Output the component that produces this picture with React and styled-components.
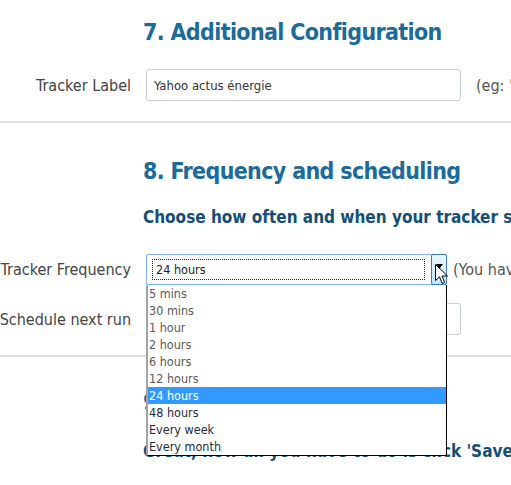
import React from "react";
import styled, { createGlobalStyle } from "styled-components";

const Global = createGlobalStyle`
  html, body { margin: 0; padding: 0; background: #fff; overflow: hidden; }
  body { font-family: "DejaVu Sans Condensed", "DejaVu Sans", sans-serif; }
`;

const Page = styled.div`
  width: 511px;
  height: 485px;
  overflow: hidden;
  position: relative;
`;

const Section = styled.section`
  padding: ${(p) => p.$pad || "0"};
  display: flex;
  flex-direction: column;
`;

const Heading = styled.h2`
  margin: 0 0 0 143px;
  font-size: 23px;
  line-height: 28px;
  letter-spacing: -0.65px;
  font-weight: bold;
  color: #1c6b9b;
  white-space: nowrap;
`;

const Intro = styled.h3`
  margin: ${(p) => p.$m || "0"};
  margin-left: 143px;
  font-size: 17px;
  line-height: 20px;
  font-weight: bold;
  color: #134f78;
  white-space: nowrap;
`;

const Row = styled.div`
  display: grid;
  grid-template-columns: 131px ${(p) => p.$field}px max-content;
  column-gap: 15px;
  align-items: center;
  margin-top: ${(p) => p.$mt || 0}px;
  white-space: nowrap;
`;

const Label = styled.label`
  text-align: right;
  font-size: 16px;
  line-height: 19px;
  color: #444;
  justify-self: end;
`;

const TextBox = styled.div`
  height: 30px;
  border: 1px solid #c5ccd3;
  border-radius: 3px;
  display: flex;
  align-items: center;
  padding-left: 7px;
  font-size: 13px;
  color: #333;
`;

const Hint = styled.span`
  font-size: 16px;
  color: #555;
  margin-left: ${(p) => p.$ml || 0}px;
`;

const Quote = styled.span`
  color: #e0803a;
`;

const SelectWrap = styled.div`
  position: relative;
  width: 301px;
`;

const SelectBox = styled.div`
  height: 29px;
  border: 1px solid #7eb4ea;
  border-radius: 2px;
  display: flex;
  align-items: stretch;
  background: #fff;
`;

const FocusField = styled.div`
  flex: 1;
  margin: 4px 6px 4px 5px;
  border: 1px dotted #222;
  display: flex;
  align-items: center;
  padding-left: 3px;
  font-size: 12.5px;
  color: #222;
`;

const ArrowButton = styled.div`
  width: 14px;
  border: 1px solid #3c7fb1;
  border-radius: 2px;
  margin: -1px -1px -1px 0;
  background: linear-gradient(#eaf6fd, #bee6fd);
  display: flex;
  justify-content: center;
  padding-top: 9px;
`;

const DropList = styled.ul`
  position: absolute;
  left: 0;
  top: 31px;
  width: 298px;
  margin: 0;
  padding: 0;
  list-style: none;
  background: #fff;
  border-left: 2px solid #a3a3a3;
  border-right: 1px solid #000;
  border-bottom: 1px solid #000;
  z-index: 2;
`;

const Option = styled.li`
  height: 17px;
  line-height: 17px;
  padding-left: 1px;
  font-size: 12.5px;
  color: ${(p) => (p.$active ? "#fff" : p.$dark ? "#1d2d40" : "#5a5a5a")};
  background: ${(p) => (p.$active ? "#3399ff" : "transparent")};
`;

const Cursor = styled.svg`
  position: absolute;
  left: 289px;
  top: 10px;
  z-index: 3;
`;

const Divider = styled.hr`
  margin: 0;
  border: none;
  height: 2px;
  background: #dedede;
`;

const options = [
  "5 mins",
  "30 mins",
  "1 hour",
  "2 hours",
  "6 hours",
  "12 hours",
  "24 hours",
  "48 hours",
  "Every week",
  "Every month",
];

export default function App() {
  return (
    <Page>
      <Global />
      <Section $pad="18px 0 20px">
        <Heading>7. Additional Configuration</Heading>
        <Row $field={315} $mt={23}>
          <Label>Tracker Label</Label>
          <TextBox>Yahoo actus énergie</TextBox>
          <Hint>
            (eg: <Quote>'</Quote>
          </Hint>
        </Row>
      </Section>
      <Divider />
      <Section $pad="34px 0 20px">
        <Heading>8. Frequency and scheduling</Heading>
        <Intro $m="22px 0 0">Choose how often and when your tracker should run</Intro>
        <Row $field={301} $mt={27}>
          <Label>Tracker Frequency</Label>
          <SelectWrap>
            <SelectBox>
              <FocusField>24 hours</FocusField>
              <ArrowButton>
                <svg width="7" height="5" viewBox="0 0 7 5">
                  <path d="M0 0 H7 L3.5 4.5 Z" fill="#000" />
                </svg>
              </ArrowButton>
            </SelectBox>
            <DropList>
              {options.map((o, i) => (
                <Option key={o} $active={o === "24 hours"} $dark={i > 6}>
                  {o}
                </Option>
              ))}
            </DropList>
            <Cursor width="13" height="21" viewBox="0 0 13 21">
              <path
                d="M0.5 0.5 V16.5 L4.5 12.8 L7.2 19.5 L9.6 18.5 L7 12 H12.5 Z"
                fill="#fff"
                stroke="#000"
                strokeWidth="1"
              />
            </Cursor>
          </SelectWrap>
          <Hint $ml={-9}>(You have 10 runs left)</Hint>
        </Row>
        <Row $field={315} $mt={18}>
          <Label>Schedule next run</Label>
          <TextBox />
          <span />
        </Row>
      </Section>
      <Divider />
      <Section $pad="31px 0 0">
        <Heading>9. Save</Heading>
        <Intro $m="25px 0 0">Great, now all you have to do is click 'Save tracker'</Intro>
      </Section>
    </Page>
  );
}
